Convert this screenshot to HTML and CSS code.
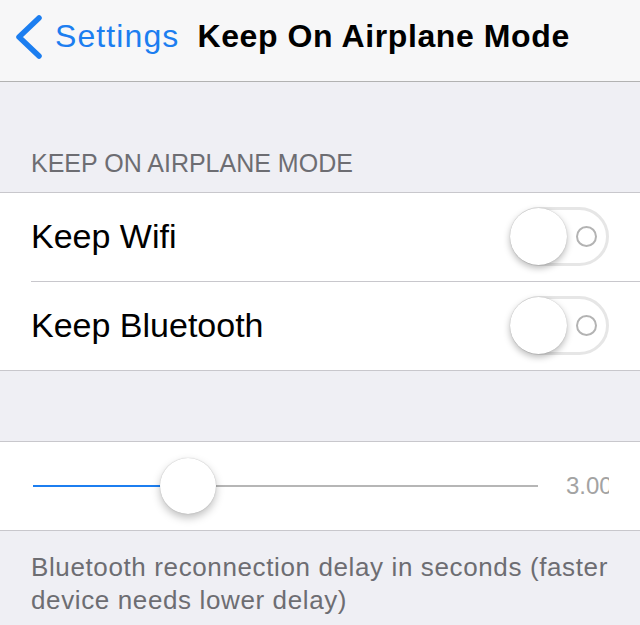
FILE: index.html
```html
<!DOCTYPE html>
<html>
<head>
<meta charset="utf-8">
<link rel="stylesheet" href="styles.css">
</head>
<body>
<div class="nav">
  <svg class="chev" width="30" height="44" viewBox="0 0 30 44"><polyline points="25,3 5,22 25,41" fill="none" stroke="#1c7ef0" stroke-width="5.5" stroke-linecap="round" stroke-linejoin="round"/></svg>
  <span class="back">Settings</span>
  <span class="title">Keep On Airplane Mode</span>
</div>
<div class="section-header">KEEP ON AIRPLANE MODE</div>
<div class="group">
  <div class="row">
    <div class="row-inner sep">
      <span class="label">Keep Wifi</span>
      <div class="switch"><div class="knob"></div><div class="ring"></div></div>
    </div>
  </div>
  <div class="row">
    <div class="row-inner">
      <span class="label">Keep Bluetooth</span>
      <div class="switch"><div class="knob"></div><div class="ring"></div></div>
    </div>
  </div>
</div>
<div class="group slider-group">
  <div class="slider-row">
    <div class="track">
      <div class="fill" style="width:30.7%"></div>
      <div class="thumb" style="left:30.7%"></div>
    </div>
    <div class="value">3.00</div>
  </div>
</div>
<div class="footer">Bluetooth reconnection delay in seconds (faster device needs lower delay)</div>
</body>
</html>
```
FILE: styles.css
```css
html, body {
  margin: 0;
  padding: 0;
}
body {
  background: #efeff4;
  font-family: "Liberation Sans", Arial, sans-serif;
  width: 640px;
  height: 625px;
  overflow: hidden;
}
.nav {
  height: 81px;
  background: #f7f7f8;
  border-bottom: 1px solid #b2b2b2;
  display: flex;
  align-items: flex-start;
}
.chev {
  margin-top: 15px;
  margin-left: 14px;
  flex: none;
}
.back {
  margin-left: 11px;
  margin-top: 18px;
  line-height: 36px;
  font-size: 32px;
  letter-spacing: 1.1px;
  color: #1c7ef0;
}
.title {
  margin-left: 18px;
  margin-top: 18px;
  line-height: 36px;
  font-size: 32px;
  font-weight: bold;
  letter-spacing: 0.6px;
  color: #000;
}
.section-header {
  padding: 66px 0 14px 31px;
  font-size: 25px;
  line-height: 30px;
  color: #6d6d72;
}
.group {
  background: #fff;
  border-top: 1px solid #c8c7cc;
  border-bottom: 1px solid #c8c7cc;
}
.row {
  padding-left: 31px;
}
.row-inner {
  height: 88px;
  display: flex;
  align-items: center;
  justify-content: space-between;
  padding-right: 31px;
}
.row-inner.sep {
  border-bottom: 1px solid #c8c7cc;
}
.label {
  font-size: 34px;
  color: #000;
  line-height: 40px;
  margin-bottom: 2px;
}
.switch {
  position: relative;
  width: 93px;
  height: 53px;
  border: 3px solid #e6e6e6;
  border-radius: 32px;
  box-sizing: content-box;
  margin-top: -2px;
}
.knob {
  position: absolute;
  left: -3px;
  top: -2px;
  width: 57px;
  height: 57px;
  border-radius: 50%;
  background: #fff;
  box-shadow: 0 3px 7px rgba(0,0,0,0.28), 0 0 1px rgba(0,0,0,0.25);
}
.ring {
  position: absolute;
  left: 63px;
  top: 16px;
  width: 17px;
  height: 17px;
  border: 2px solid #b3b3b3;
  border-radius: 50%;
}
.slider-group {
  margin-top: 70px;
}
.slider-row {
  height: 88px;
  display: flex;
  align-items: center;
  padding: 0 31px 0 33px;
}
.track {
  position: relative;
  flex: 1;
  height: 2px;
  background: #b6b6b6;
}
.fill {
  height: 2px;
  background: #1c7ef0;
}
.thumb {
  position: absolute;
  top: -27px;
  width: 56px;
  height: 56px;
  margin-left: -28px;
  border-radius: 50%;
  background: #fff;
  box-shadow: 0 4px 8px rgba(0,0,0,0.25), 0 0 1px rgba(0,0,0,0.3);
}
.value {
  width: 43px;
  margin-left: 28px;
  overflow: hidden;
  white-space: nowrap;
  font-size: 24px;
  color: #a3a3a3;
  line-height: 30px;
}
.footer {
  padding: 20px 31px 0 31px;
  font-size: 26px;
  line-height: 33px;
  letter-spacing: 0.62px;
  color: #6d6d72;
}
```
